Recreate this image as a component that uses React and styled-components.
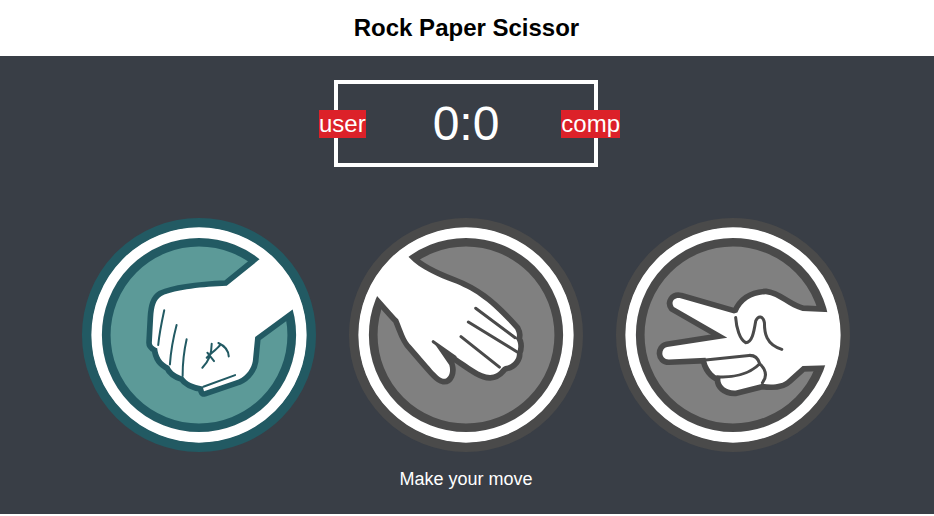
import React from "react";
import styled, { createGlobalStyle } from "styled-components";

const GlobalStyle = createGlobalStyle`
  body {
    margin: 0;
    font-family: "Liberation Sans", Arial, sans-serif;
    background: #fff;
  }
`;

const Header = styled.header`
  height: 56px;
  padding-right: 1px;
  background: #fff;
  display: flex;
  align-items: center;
  justify-content: center;
`;

const Title = styled.h1`
  margin: 0;
  font-size: 24px;
  font-weight: 700;
  color: #000;
`;

const Main = styled.main`
  box-sizing: border-box;
  height: 458px;
  padding: 24px 2px 0 0;
  background: #393e46;
`;

const ScoreBoard = styled.div`
  position: relative;
  box-sizing: border-box;
  width: 264px;
  height: 87px;
  margin: 0 auto;
  border: 4px solid #fff;
  display: flex;
  align-items: center;
  justify-content: center;
  color: #fff;
  font-size: 48px;
`;

const Tag = styled.div`
  position: absolute;
  top: 26px;
  ${({ $side }) => ($side === "left" ? "left: -19px;" : "right: -26px;")}
  height: 28px;
  line-height: 28px;
  background: #dc2129;
  color: #fff;
  font-size: 24px;
`;

const Choices = styled.div`
  display: flex;
  justify-content: center;
  gap: 33px;
  margin-top: 51px;
`;

const Choice = styled.svg`
  display: block;
  width: 234px;
  height: 234px;
  cursor: pointer;
`;

const Message = styled.p`
  margin: 17px 0 0;
  text-align: center;
  color: #fff;
  font-size: 18px;
`;

const tones = {
  teal: { dark: "#225a63", light: "#5c9a98" },
  gray: { dark: "#4a4a4a", light: "#808080" },
};

// rings share the hand's coordinates, traced at 3x from the reference
const Badge = ({ box, cx, tone, hand, lines, lineWidth = 9 }) => {
  const { dark, light } = tones[tone];
  return (
    <Choice viewBox={`${box} 22 700 700`}>
      <circle cx={cx} cy="372" r="278" fill={light} stroke={dark} strokeWidth="27" />
      <path
        d={hand}
        fill="#fff"
        stroke={dark}
        strokeWidth="34"
        strokeLinejoin="round"
        paintOrder="stroke"
      />
      <path d={lines} fill="none" stroke={dark} strokeWidth={lineWidth} strokeLinecap="round" strokeLinejoin="round" />
      <circle cx={cx} cy="372" r="307" fill="none" stroke="#fff" strokeWidth="33" />
      <circle cx={cx} cy="372" r="336" fill="none" stroke={dark} strokeWidth="28" />
    </Choice>
  );
};

const rockHand =
  "M565 148 L470 225 C400 228 320 235 275 255 C258 265 252 285 250 320 L246 395 C246 405 256 408 262 412 C264 435 275 455 298 465 C305 482 322 492 340 497 C350 512 370 522 398 526 L402 540 L505 505 C530 495 545 470 548 450 L555 378 L665 297 L690 280 L665 212 L590 130 Z";
const rockLines =
  "M283 298 C275 335 268 370 265 402 M320 342 C310 380 303 415 300 460 M350 385 C342 420 338 460 338 495 M400 527 L495 492 M397 470 C412 455 425 430 425 398 M412 425 L432 450 M410 440 C425 425 440 415 452 400 M445 396 C465 405 475 420 476 436";

const paperHand =
  "M208 140 C240 175 300 200 340 215 C400 238 450 270 525 355 C532 368 532 378 526 382 C538 395 535 415 530 425 C532 442 520 460 495 465 C482 468 480 490 450 492 C420 490 390 465 345 435 L280 392 L328 462 C335 485 325 505 310 503 C295 500 280 480 215 405 C195 385 190 360 175 325 C160 310 130 275 112 255 L95 235 L120 180 L185 120 Z";
const paperLines =
  "M407 292 L525 380 M385 333 L530 422 M363 377 L478 468 M280 392 L345 438";

const scissorHand =
  "M690 305 L590 300 C550 290 520 255 480 250 C440 252 410 270 395 305 L385 308 L225 262 C205 258 195 275 205 288 L365 380 L185 408 C165 412 165 445 190 445 L300 440 C305 470 320 490 345 500 C340 520 360 540 390 538 L470 518 C500 522 530 520 545 505 L590 465 L690 462 Z";
const scissorLines =
  "M390 320 C392 350 402 385 420 395 C440 395 445 360 450 330 C458 312 472 315 476 335 C476 365 480 400 528 415 M300 447 L430 433 C450 432 458 445 462 458 M335 497 C380 500 430 490 462 458 C480 475 485 495 470 515";

const App = () => (
  <>
    <GlobalStyle />
    <Header>
      <Title>Rock Paper Scissor</Title>
    </Header>
    <Main>
      <ScoreBoard>
        <Tag $side="left">user</Tag>
        0:0
        <Tag $side="right">comp</Tag>
      </ScoreBoard>
      <Choices>
        <Badge box={37} cx={387} tone="teal" hand={rockHand} lines={rockLines} lineWidth={6} />
        <Badge box={28} cx={378} tone="gray" hand={paperHand} lines={paperLines} />
        <Badge box={32} cx={382} tone="gray" hand={scissorHand} lines={scissorLines} />
      </Choices>
      <Message>Make your move</Message>
    </Main>
  </>
);

export default App;
